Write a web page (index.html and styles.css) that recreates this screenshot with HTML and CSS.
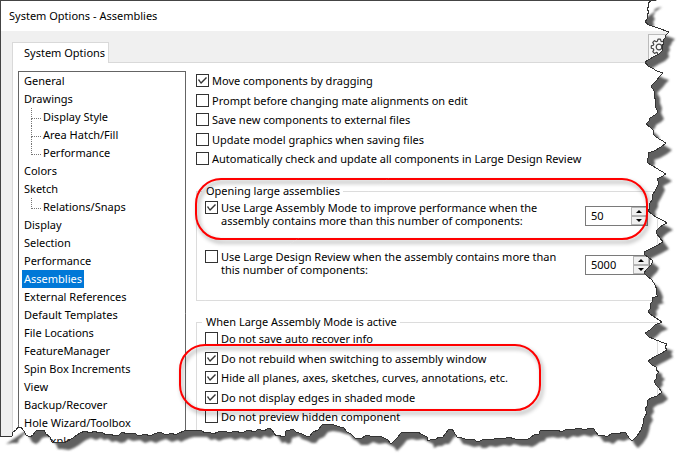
FILE: index.html
```html
<!DOCTYPE html>
<html lang="en">
<head>
<meta charset="utf-8">
<title>System Options - Assemblies</title>
<link rel="stylesheet" href="styles.css">
</head>
<body>
<main class="capture">
  <div class="dialog">
    <h1 class="titlebar">System Options - Assemblies</h1>
    <div class="tabs">
      <button class="tab" type="button">System Options</button>
      <button class="gear" type="button" aria-label="Options">
        <svg viewBox="0 0 18 18" width="18" height="18" fill="none" stroke="#444" stroke-width="1.2" stroke-linejoin="round">
          <path d="M7.4 3.2 8 1.2h2.4l.6 2 1 .5 1.9-1 1.7 1.7-1 1.9.4 1 2 .6v2.3l-2 .6-.5 1.1 1 1.8-1.7 1.7-1.8-1-1 .5-.6 2H8l-.6-2-1.1-.5-1.8 1-1.7-1.7 1-1.8-.5-1.1-2-.6V7.900l2-.6.5-1-1-1.900 1.700-1.700 1.800 1z"/>
          <circle cx="9" cy="9" r="2.800"/>
        </svg>
      </button>
    </div>
    <div class="panel">
      <ul class="tree">
        <li><a href="#">General</a></li>
        <li><a href="#">Drawings</a>
          <ul>
            <li><a href="#">Display Style</a></li>
            <li><a href="#">Area Hatch/Fill</a></li>
            <li><a href="#">Performance</a></li>
          </ul>
        </li>
        <li><a href="#">Colors</a></li>
        <li><a href="#">Sketch</a>
          <ul>
            <li><a href="#">Relations/Snaps</a></li>
          </ul>
        </li>
        <li><a href="#">Display</a></li>
        <li><a href="#">Selection</a></li>
        <li><a href="#">Performance</a></li>
        <li><a href="#" class="selected">Assemblies</a></li>
        <li><a href="#">External References</a></li>
        <li><a href="#">Default Templates</a></li>
        <li><a href="#">File Locations</a></li>
        <li><a href="#">FeatureManager</a></li>
        <li><a href="#">Spin Box Increments</a></li>
        <li><a href="#">View</a></li>
        <li><a href="#">Backup/Recover</a></li>
        <li><a href="#">Hole Wizard/Toolbox</a></li>
        <li><a href="#">File Explorer</a></li>
      </ul>
      <form class="settings">
        <div class="checks">
          <label><input type="checkbox" checked>Move components by dragging</label>
          <label><input type="checkbox">Prompt before changing mate alignments on edit</label>
          <label><input type="checkbox">Save new components to external files</label>
          <label><input type="checkbox">Update model graphics when saving files</label>
          <label><input type="checkbox">Automatically check and update all components in Large Design Review</label>
        </div>
        <fieldset class="group opening">
          <legend>Opening large assemblies</legend>
          <div class="threshold">
            <label><input type="checkbox" checked><span>Use Large Assembly Mode to improve performance when the<br>assembly contains more than this number of components:</span></label>
            <div class="spin">
              <input type="text" value="50" aria-label="Large Assembly Mode threshold">
              <div class="steps"><button type="button" class="up" aria-label="Increase"></button><button type="button" class="down" aria-label="Decrease"></button></div>
            </div>
          </div>
          <div class="threshold">
            <label><input type="checkbox"><span>Use Large Design Review when the assembly contains more than<br>this number of components:</span></label>
            <div class="spin spin-wide">
              <input type="text" value="5000" aria-label="Large Design Review threshold">
              <div class="steps"><button type="button" class="up" aria-label="Increase"></button><button type="button" class="down" aria-label="Decrease"></button></div>
            </div>
          </div>
          <div class="callout callout-opening"></div>
        </fieldset>
        <fieldset class="group active">
          <legend>When Large Assembly Mode is active</legend>
          <div class="checks">
            <label><input type="checkbox">Do not save auto recover info</label>
            <label><input type="checkbox" checked>Do not rebuild when switching to assembly window</label>
            <label><input type="checkbox" checked>Hide all planes, axes, sketches, curves, annotations, etc.</label>
            <label><input type="checkbox" checked>Do not display edges in shaded mode</label>
            <label><input type="checkbox">Do not preview hidden component</label>
          </div>
          <div class="callout callout-active"></div>
        </fieldset>
      </form>
    </div>
  </div>
  <svg class="tear" viewBox="0 0 690 468" preserveAspectRatio="none" aria-hidden="true">
    <defs>
      <path id="edge" d="M656 0 L651 1 648 3 649 6 647 9 649 12 647 15 648 18 645 22 649 25 655 27 669 32 666 35 665 38 663 40 664 43 662 46 663 50 659 54 653 57 645 62 648 66 652 68 657 71 663 73 660 76 657 80 654 83 651 86 654 91 654 96 656 101 655 106 657 110 658 112 655 115 650 118 649 121 646 124 650 127 653 130 653 134 656 137 661 140 666 143 661 147 654 151 648 153 649 156 647 160 648 163 656 168 666 174 661 177 657 179 659 183 657 187 655 191 652 196 652 200 649 205 650 208 648 211 656 217 664 221 667 223 663 225 659 228 656 231 657 234 660 238 663 242 656 246 650 249 644 252 645 255 648 257 653 261 651 265 647 269 644 273 647 276 652 280 655 285 657 290 656 294 658 296 652 298 653 301 650 304 651 308 648 311 650 314 656 318 662 322 655 325 650 330 645 333 649 337 654 339 661 342 667 344 665 347 667 350 660 354 654 357 648 361 652 365 656 367 656 370 659 372 656 375 657 378 654 381 656 385 659 388 662 392 657 396 651 398 647 401 648 405 645 409 647 413 644 418 643 424 641 430 637 436 632 441 629 438 626 433 623 432 618 434 612 433 607 437 603 435 598 435 595 431 594 429 588 428 586 430 578 428 572 430 567 429 561 432 558 430 552 431 547 430 540 431 539 434 534 435 530 438 526 440 522 439 515 439 508 437 504 439 498 438 490 440 484 439 480 441 476 441 474 439 468 440 462 438 457 437 454 432 452 429 448 430 446 433 443 437 439 437 436 439 432 439 428 441 427 437 421 434 418 432 411 433 406 432 401 433 397 438 391 444 388 440 384 438 380 436 373 437 367 435 362 438 355 438 351 434 347 432 344 428 340 427 334 425 327 424 322 425 318 430 313 432 310 436 306 436 302 434 296 432 293 429 290 430 286 431 285 436 282 437 279 435 276 436 272 430 269 428 264 431 258 429 255 432 248 430 242 433 235 431 229 433 225 431 218 432 213 434 209 432 205 433 201 430 195 430 188 430 184 431 179 433 175 435 172 433 166 435 160 432 154 434 150 436 145 434 139 436 134 433 127 434 122 432 119 435 115 436 110 434 106 435 102 432 98 433 95 431 90 433 85 431 80 433 77 435 73 438 68 441 63 443 56 442 52 442 50 437 46 434 44 430 39 430 36 431 33 435 30 437 26 435 24 431 21 427 18 427 16 430 13 432 12 436 6 436 0 437"/>
      <mask id="outside" maskUnits="userSpaceOnUse" x="0" y="0" width="690" height="468">
        <rect width="690" height="468" fill="#fff"/>
        <use href="#edge" fill="#000"/>
        <path d="M0 0H657L0 437Z" fill="#000"/>
      </mask>
      <filter id="soft" x="-5%" y="-5%" width="110%" height="110%"><feGaussianBlur stdDeviation="1.300"/></filter>
    </defs>
    <g mask="url(#outside)">
      <rect width="690" height="468" fill="#fff"/>
      <g filter="url(#soft)" fill="#606060">
        <g transform="translate(6 7)"><use href="#edge"/></g>
      </g>
    </g>
    <use href="#edge" fill="none" stroke="#333" shape-rendering="crispEdges"/>
  </svg>
</main>
</body>
</html>
```
FILE: styles.css
```css
* { box-sizing: border-box; }
body {
  margin: 0;
  background: #fff;
  color: #000;
  font: 11px/18px "Noto Sans", "Open Sans", sans-serif;
}
button, input { font: inherit; color: inherit; margin: 0; }
.capture {
  position: relative;
  height: 100vh;
  overflow: hidden;
}
.dialog {
  min-height: 100%;
  display: flex;
  flex-direction: column;
  background: #f0f0f0;
  border-top: 1px solid #444;
  border-left: 1px solid #444;
}
.titlebar {
  margin: 0;
  padding: 6px 8px;
  background: #fff;
  font-size: 11px;
  font-weight: 400;
  line-height: 18px;
}
.tabs {
  display: flex;
  justify-content: space-between;
  align-items: flex-end;
  padding: 3px 17px 0 11px;
}
.tab {
  height: 21px;
  padding: 0 3px 0 11px;
  margin-bottom: -1px;
  background: #fff;
  border: 1px solid #d9d9d9;
  border-bottom: 0;
  line-height: 18px;
  position: relative;
}
.gear {
  display: flex;
  align-items: center;
  width: 25px;
  height: 28px;
  padding: 0 0 4px 1px;
  background: #f7f7f7;
  border: 1px solid #bbb;
  border-bottom: 0;
}
.panel {
  flex: 1;
  display: flex;
  align-items: stretch;
  gap: 10px;
  margin-left: 11px;
  padding: 8px 32px 0 5px;
  background: #fff;
  border-top: 1px solid #d9d9d9;
  border-left: 1px solid #d9d9d9;
}
.tree {
  flex: 0 0 168px;
  border: 1px solid #646464;
  border-bottom: 0;
  padding: 0 3px;
}
.tree, .tree ul { margin: 0; list-style: none; }
.tree ul { padding: 0 0 0 9px; }
.tree li { line-height: 18px; }
.tree a {
  display: inline-block;
  height: 18px;
  padding: 0 2px;
  color: inherit;
  text-decoration: none;
  vertical-align: top;
}
.tree .selected { background: #0078d7; color: #fff; }
.tree li li {
  position: relative;
  padding-left: 10px;
}
.tree li li::before {
  content: "";
  position: absolute;
  left: 0;
  top: 0;
  width: 9px;
  height: 10px;
  border-left: 1px dotted #777;
  border-bottom: 1px dotted #777;
}
.tree li li:not(:last-child)::after {
  content: "";
  position: absolute;
  left: 0;
  top: 10px;
  height: 8px;
  border-left: 1px dotted #777;
}
.settings {
  flex: 1;
  min-width: 0;
  white-space: nowrap;
}
.checks label {
  display: flex;
  align-items: center;
  gap: 3px;
  height: 19px;
}
.checks label:nth-child(odd) { margin-bottom: 1px; }
input[type="checkbox"] {
  appearance: none;
  flex: none;
  width: 13px;
  height: 13px;
  background: #fff;
  border: 1px solid #333;
}
input[type="checkbox"]:checked::before {
  content: "";
  display: block;
  height: 11px;
  background: #333;
  clip-path: polygon(1px 5px, 2px 4px, 4px 7px, 9px 2px, 10px 3px, 4px 9px);
}
.group {
  position: relative;
  min-width: 0;
  margin: 0;
  padding: 0 0 0 8px;
  border: 1px solid #dcdcdc;
}
.group legend {
  margin-left: -3px;
  padding: 0 3px 0 4px;
  line-height: 16px;
}
.opening { margin-top: 15px; padding-bottom: 11px; }
.active { margin-top: 13px; padding-bottom: 30px; }
.active .checks { margin-top: -1px; }
.threshold {
  display: flex;
  justify-content: space-between;
  padding-right: 9px;
  height: 41px;
}
.threshold + .threshold { margin-top: 8px; padding-right: 7px; }
.threshold label {
  display: flex;
  gap: 3px;
  line-height: 13px;
  padding-top: 2px;
}
.spin {
  display: flex;
  width: 63px;
  height: 20px;
  margin-top: 7px;
  background: #fff;
  border: 1px solid #7a7a7a;
}
.spin-wide { width: 65px; }
.spin input {
  flex: 1;
  min-width: 0;
  padding: 0 5px;
  border: 0;
  background: none;
}
.steps {
  display: flex;
  flex-direction: column;
  width: 16px;
}
.steps button {
  flex: 1;
  display: flex;
  align-items: center;
  justify-content: center;
  padding: 0;
  background: #f0f0f0;
  border: 1px solid #b4b4b4;
}
.steps button::before {
  content: "";
  border: 3px solid transparent;
  border-top-width: 0;
  border-bottom-color: #000;
}
.steps .down::before {
  border-width: 3px 3px 0;
  border-color: #000 transparent transparent;
}
.callout {
  position: absolute;
  border: 2px solid #f00;
  border-radius: 26px;
  filter: drop-shadow(2px 3px 2px rgba(0, 0, 0, .4));
  pointer-events: none;
}
.callout-opening {
  left: -2px;
  right: 9px;
  top: -21px;
  height: 62px;
}
.callout-active {
  left: -18px;
  width: 362px;
  top: 14px;
  height: 67px;
}
.tear {
  position: absolute;
  inset: 0;
  width: 100%;
  height: 100%;
  pointer-events: none;
}
```
